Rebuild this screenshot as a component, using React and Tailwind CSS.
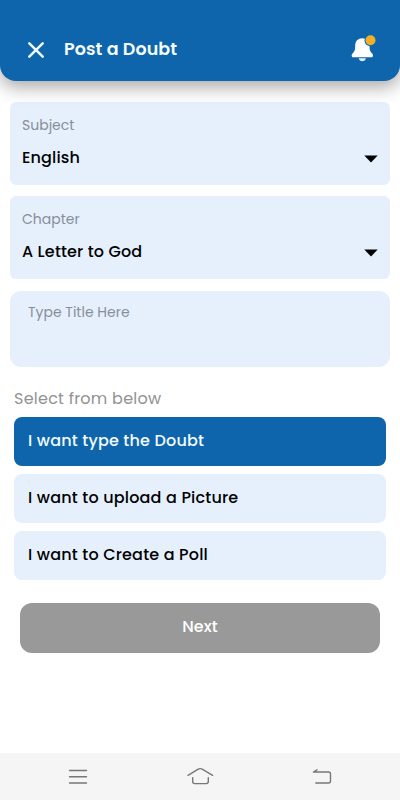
import React from 'react';

function CloseIcon() {
  return (
    <svg width="18" height="18" viewBox="0 0 18 18" fill="none" stroke="#effbff" strokeWidth="2.5" strokeLinecap="round">
      <path d="M2.3 2.3 15.7 15.7M15.7 2.3 2.3 15.7" />
    </svg>
  );
}

function BellIcon() {
  return (
    <svg width="26" height="28" viewBox="0 0 26 28">
      <path d="M12.3 3.2C8 3.2 5.2 6.3 5.2 10.3c0 4.6-.6 6.6-2.6 8.1-1.6 1.3-1 3.8.9 3.8h17.7c1.9 0 2.5-2.5.9-3.8-2-1.5-2.6-3.5-2.6-8.1 0-4-2.9-7.1-7.2-7.1Z" fill="#fff" />
      <path d="M8.7 23.2h7.2c-.4 1.8-1.8 3-3.6 3s-3.2-1.2-3.6-3Z" fill="#e3f0fb" />
      <circle cx="20.5" cy="5.3" r="6" fill="#0f65ab" />
      <circle cx="20.5" cy="5.3" r="5" fill="#f3b027" />
    </svg>
  );
}

function SelectCard({ label, value }) {
  return (
    <button className="flex h-[83px] w-full flex-col rounded-md bg-[#e6f0fd] px-3 pt-[12.5px] text-left">
      <span className="text-sm leading-5 text-[#868e99]">{label}</span>
      <span className="mt-[13.5px] flex w-full items-center justify-between">
        <span className="text-base leading-5 font-medium tracking-[0.15px] text-black">{value}</span>
        <svg className="mt-px" width="14" height="8" viewBox="0 0 14 8"><path d="M0.3 0.5h13.4L7 7.5Z" /></svg>
      </span>
    </button>
  );
}

function Option({ children, className }) {
  return (
    <button className={`flex h-[49px] w-full rounded-lg px-[14px] pt-[14px] text-left text-base leading-5 font-medium tracking-[0.19px] ${className}`}>
      <span>{children}</span>
    </button>
  );
}

export default function App() {
  return (
    <div className="flex h-[800px] w-[400px] flex-col bg-white font-['Poppins','Inter',sans-serif] [font-feature-settings:'cv11'] whitespace-nowrap">
      <header className="relative flex h-[81px] shrink-0 rounded-b-2xl bg-[#0f65ab] pl-[27px] pt-[35px] shadow-[0_6px_18px_rgba(0,0,0,0.35)]">
        <span className="mt-[6px]"><CloseIcon /></span>
        <h1 className="ml-[19px] mt-[4px] text-[17.5px] leading-5 font-semibold tracking-[0.07px] text-[#f4fcff]">Post a Doubt</h1>
        <span className="mr-6 ml-auto"><BellIcon /></span>
      </header>
      <main className="flex flex-1 flex-col px-[10px] pt-[21px]">
        <div className="flex flex-col gap-[11px]">
          <SelectCard label="Subject" value="English" />
          <SelectCard label="Chapter" value="A Letter to God" />
        </div>
        <div className="mt-3 h-[76px] rounded-[11px] bg-[#e6f0fd] px-[18px] pt-[11px] text-sm leading-5 text-[#868e99]">Type Title Here</div>
        <section className="flex flex-col px-1 pt-[22px]">
          <h2 className="text-base leading-5 tracking-[0.24px] text-[#929292]">Select from below</h2>
          <div className="mt-2 flex flex-col gap-2">
            <Option className="bg-[#0f65ab] text-[#f1fcff]">I want type the Doubt</Option>
            <Option className="bg-[#e6f0fd] text-black">I want to upload a Picture</Option>
            <Option className="bg-[#e6f0fd] text-black">I want to Create a Poll</Option>
          </div>
        </section>
        <button className="mx-[10px] mt-[23px] flex h-[50px] justify-center rounded-xl bg-[#999] pt-[14px] text-base leading-5 font-medium text-white">Next</button>
      </main>
      <nav className="flex h-[47px] shrink-0 bg-[#f5f5f5]">
        <svg width="400" height="47" viewBox="0 0 400 47" fill="none" stroke="#777" strokeWidth="1.4" strokeLinecap="round" strokeLinejoin="round">
          <path d="M69.5 17.5h17M69.5 23.7h17M69.5 30h17" />
          <path d="M188 22.3 198.2 16.2q2-1.2 4 0L212.6 22.3M192.7 24.6v4q0 2 2 2h11.6q2 0 2-2v-4" />
          <path d="M315.8 30H328.5q2 0 2-2V21q0-2-2-2H313.4L317 16.8" />
        </svg>
      </nav>
    </div>
  );
}
